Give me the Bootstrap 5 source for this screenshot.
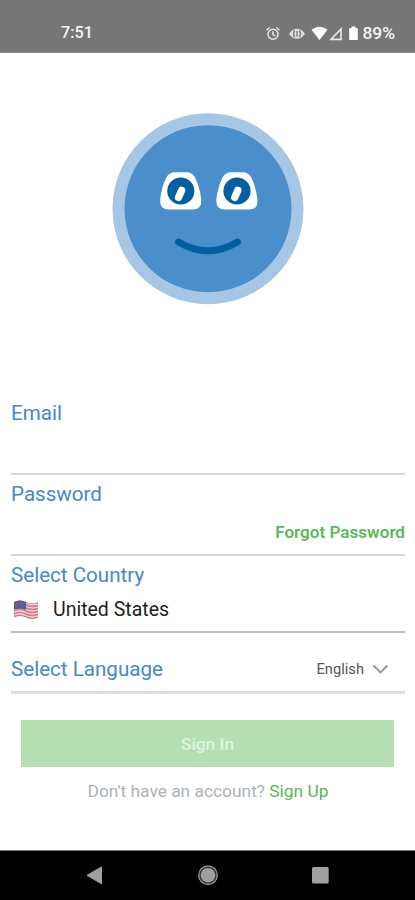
<!DOCTYPE html>
<html lang="en">
<head>
<meta charset="utf-8">
<meta name="viewport" content="width=device-width, initial-scale=1">
<title>Sign In</title>
<link href="https://cdn.jsdelivr.net/npm/bootstrap@5.3.0/dist/css/bootstrap.min.css" rel="stylesheet">
<style>
  body { font-family: Roboto, sans-serif; color: #222; background: #fff; }
  .screen { height: 900px; overflow: hidden; }
  .status-bar { height: 53px; background: #767676; border-bottom: 1px solid #8c8c8c; color: #f4f4f4; padding: 15px 20px 0 61px; font-size: 17.400px; font-weight: 500; line-height: 1; }
  .status-bar .clock { font-size: 16.200px; }
  .hero { height: 345px; padding-top: 60px; padding-left: 1px; }
  .login-form { padding: 0 10px 0 11px; }
  .field { border-bottom: 2px solid #d6d6d6; padding-top: 3px; }
  .field-label { color: #4489ca; font-size: 20.600px; line-height: 24px; }
  .field-email { height: 77px; }
  .field-password { height: 81px; padding-top: 7px; }
  .field-country { height: 77px; padding-top: 7px; border-color: #bdbdbd; }
  .field-language { height: 61px; padding-top: 0; border-bottom-width: 3px; border-color: #dedede; }
  .language-inner { padding-top: 14px; }
  .forgot { color: #5cb860; font-size: 17.100px; font-weight: 600; line-height: 20px; margin-top: 16px; }
  .country-name { font-size: 19.500px; line-height: 22px; margin-left: 14px; }
  .country-row { margin-top: 12px; padding-left: 2px; }
  .language-name { color: #555; font-size: 14.700px; line-height: 20px; margin-right: 8px; }
  .btn-signin, .btn-signin:disabled { height: 47px; margin: 26px 11px 0 10px; padding-top: 8px; background: #b5dfb2; color: #dff3dd; border: 0; border-radius: 0; font-size: 17.300px; font-weight: 500; opacity: 1; }
  .signup-line { color: #acb2b8; font-size: 17.350px; line-height: 20px; margin-top: 14px; }
  .signup-line a { color: #58b658; }
  .system-nav { height: 50px; background: #000; border-top: 1px solid #777; }
</style>
</head>
<body>
<div class="screen d-flex flex-column">
  <header class="status-bar d-flex justify-content-between flex-shrink-0">
    <div class="clock d-flex align-items-center h-100"><span>7:51</span></div>
    <div class="d-flex align-items-center h-100">
      <svg width="97" height="20" viewBox="265 23 97 20" fill="none">
        <g stroke="#e6e6e6" stroke-width="1.5">
          <circle cx="273" cy="33.3" r="5"/>
          <path d="M266.5 29.2l3.2-2.7M279.5 29.2l-3.2-2.7M273 30.3v3.4l2.2 1.4"/>
        </g>
        <path d="M289 32.8q3.4-5 8-5t8 5q-3.4 5-8 5t-8-5z" fill="#dedede"/>
        <path d="M294.6 29.3q-2 3.5 0 7M299.4 29.3q2 3.5 0 7" stroke="#767676" stroke-width="1.3"/>
        <path d="M297 30v5.6" stroke="#8a8a8a" stroke-width="1.6"/>
        <path d="M311.5 28.800q8-6.300 16 0L319.500 39z" fill="#fff"/>
        <path d="M331 38.300L341 28v10.300z" stroke="#e6e6e6" stroke-width="1.700"/>
        <path d="M351.500 25.500h4v1.700h2.300v11.800h-8.600V27.200h2.300z" fill="#fff"/>
      </svg>
      <span>89%</span>
    </div>
  </header>

  <section class="hero text-center flex-shrink-0">
    <svg width="192" height="192" viewBox="112 113 192 192" fill="none">
      <circle cx="208" cy="208.700" r="95.500" fill="#a5c6e4"/>
      <circle cx="208" cy="208.700" r="83.500" fill="#4a8ecb"/>
      <g id="eye">
        <path d="M175 172.300h11.500q5.500 0 8.300 4.700q4.700 9 6.400 22q.8 10.500-8 10.500h-25q-8.800 0-8-10.500q1.700-13 6.400-22q2.800-4.700 8.400-4.700z" fill="#fff"/>
        <circle cx="180.800" cy="191" r="13.600" fill="#045f9e"/>
        <path d="M181.600 190.400l-3 7" stroke="#fff" stroke-width="7.400" stroke-linecap="round"/>
      </g>
      <use href="#eye" x="56.200"/>
      <path d="M178.500 242q29.500 17.500 59 0" stroke="#045f9e" stroke-width="6.800" stroke-linecap="round"/>
    </svg>
  </section>

  <main class="login-form flex-grow-1">
    <div class="field field-email"><div class="field-label">Email</div></div>
    <div class="field field-password">
      <div class="field-label">Password</div>
      <div class="forgot text-end">Forgot Password</div>
    </div>
    <div class="field field-country">
      <div class="field-label">Select Country</div>
      <div class="country-row d-flex align-items-center">
        <svg width="26" height="20" viewBox="0 0 26 20">
          <defs><clipPath id="flag"><path d="M1 2q6-3 12 0t12 0v15.500q-6 3-12 0t-12 0z"/></clipPath></defs>
          <g clip-path="url(#flag)">
            <path d="M0 0h26v20H0z" fill="#ecd3d8"/>
            <path d="M0 2q6.500-3 13 0t13 0M0 5q6.500-3 13 0t13 0M0 8q6.500-3 13 0t13 0M0 11q6.500-3 13 0t13 0M0 14q6.500-3 13 0t13 0M0 17q6.500-3 13 0t13 0" fill="none" stroke="#d07b86" stroke-width="1.600"/>
            <path d="M0 0h13v9.800q-6-2-13 0z" fill="#555c92"/>
            <path d="M3 3.500h9M3 6h9" stroke="#7d84ae" stroke-width=".9" stroke-dasharray="1 1.500"/>
          </g>
        </svg>
        <span class="country-name">United States</span>
      </div>
    </div>
    <div class="field field-language d-flex align-items-center justify-content-between">
      <div class="field-label language-inner">Select Language</div>
      <div class="language-inner d-flex align-items-center pe-3">
        <span class="language-name">English</span>
        <svg width="17" height="11" viewBox="0 0 17 11"><path d="M1.500 1.500l7 7 7-7" fill="none" stroke="#999" stroke-width="1.900"/></svg>
      </div>
    </div>
    <div class="d-grid"><button type="button" class="btn btn-signin" disabled>Sign In</button></div>
    <div class="signup-line text-center">Don't have an account? <a href="#" class="text-decoration-none">Sign Up</a></div>
  </main>

  <nav class="system-nav flex-shrink-0">
    <svg width="415" height="49" viewBox="0 851 415 49">
      <path d="M87 875.300l14.500-8.300v16.800z" fill="#a0a0a0" stroke="#a0a0a0" stroke-linejoin="round"/>
      <circle cx="208" cy="875.200" r="9.300" fill="#333" stroke="#999" stroke-width="1.300"/>
      <circle cx="208" cy="875.200" r="7.300" fill="#a0a0a0"/>
      <rect x="312" y="867" width="16.700" height="16.500" rx="1.500" fill="#a0a0a0"/>
    </svg>
  </nav>
</div>
<script src="https://cdn.jsdelivr.net/npm/bootstrap@5.3.0/dist/js/bootstrap.bundle.min.js"></script>
</body>
</html>
